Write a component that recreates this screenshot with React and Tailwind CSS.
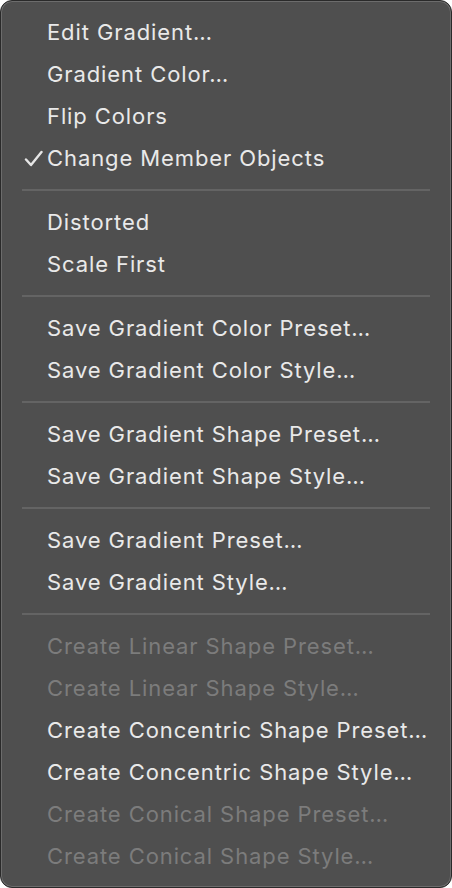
import React from "react";

const sections = [
  [
    { t: "Edit Gradient…" },
    { t: "Gradient Color…" },
    { t: "Flip Colors" },
    { t: "Change Member Objects", check: true },
  ],
  [{ t: "Distorted" }, { t: "Scale First" }],
  [{ t: "Save Gradient Color Preset…" }, { t: "Save Gradient Color Style…" }],
  [{ t: "Save Gradient Shape Preset…" }, { t: "Save Gradient Shape Style…" }],
  [{ t: "Save Gradient Preset…" }, { t: "Save Gradient Style…" }],
  [
    { t: "Create Linear Shape Preset…", dis: true },
    { t: "Create Linear Shape Style…", dis: true },
    { t: "Create Concentric Shape Preset…" },
    { t: "Create Concentric Shape Style…" },
    { t: "Create Conical Shape Preset…", dis: true },
    { t: "Create Conical Shape Style…", dis: true },
  ],
];

function Row({ item }) {
  return (
    <div className="relative h-[42px] flex items-center pl-[46px]">
      {item.check && (
        <svg
          className="absolute left-[23px] top-[13px]"
          width="19"
          height="17"
          viewBox="0 0 19 17"
          fill="none"
        >
          <path
            d="M2 9.5 L7 15 L17.5 2"
            stroke="#e6e6e6"
            strokeWidth="2.4"
            strokeLinecap="round"
            strokeLinejoin="round"
          />
        </svg>
      )}
      <span
        className={
          "text-[22px] leading-none whitespace-nowrap tracking-[0.9px] " +
          (item.dis ? "text-[#7c7c7c]" : "text-[#e9e9e9]")
        }
      >
        {item.t}
      </span>
    </div>
  );
}

export default function App() {
  return (
    <div className="w-[452px] h-[888px] bg-white" style={{ fontFamily: "Inter, 'Noto Sans', sans-serif" }}>
      <div className="w-[452px] h-[888px] rounded-[12px] border border-[#2a2a2a] bg-[#4f4f4f] shadow-[inset_0_0_0_1px_#6c6c6c] py-[10px] overflow-hidden">
        {sections.map((sec, i) => (
          <div key={i}>
            {i > 0 && (
              <div className="py-[10px] pl-[21px] pr-[21px]">
                <div className="h-[2px] bg-[#646464]" />
              </div>
            )}
            {sec.map((it, j) => (
              <Row key={j} item={it} />
            ))}
          </div>
        ))}
      </div>
    </div>
  );
}
